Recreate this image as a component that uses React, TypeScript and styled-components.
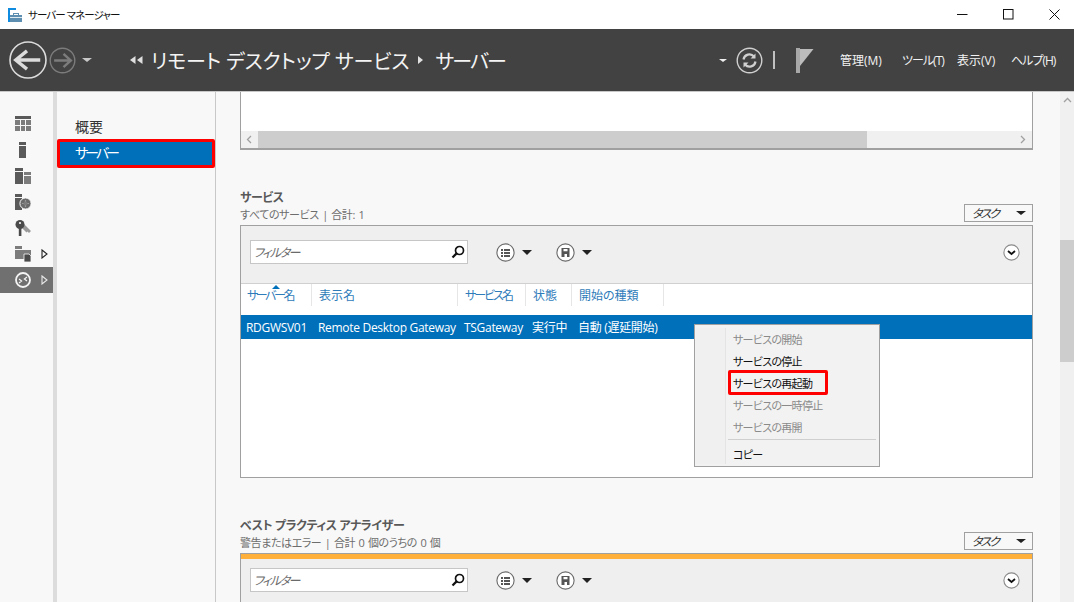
import React from "react";
import styled, { createGlobalStyle } from "styled-components";

const GlobalStyle = createGlobalStyle`
  html, body {
    margin: 0;
    padding: 0;
    height: 100%;
    overflow: hidden;
    background: #f8f8f8;
    font-family: "Open Sans", "Noto Sans CJK JP", sans-serif;
    font-feature-settings: "palt";
  }
  * { box-sizing: border-box; }
`;

const Window = styled.div`
  width: 1074px;
  height: 602px;
  display: flex;
  flex-direction: column;
  overflow: hidden;
`;

const TitleBar = styled.div`
  height: 29px;
  background: #fff;
  display: flex;
  align-items: center;
  padding-left: 8px;
`;

const TitleText = styled.span`
  margin-left: 6px;
  font-size: 10.5px;
  letter-spacing: -0.9px;
  color: #111;
`;

const WinButtons = styled.div`
  margin-left: auto;
  margin-right: -3px;
  display: flex;
  align-items: center;
`;

const WinButton = styled.div`
  width: 46px;
  height: 26px;
  display: flex;
  align-items: center;
  justify-content: center;
`;

const Header = styled.header`
  height: 63px;
  background: #424242;
  border-bottom: 1px solid #c8c8c8;
  display: flex;
  align-items: center;
  padding-left: 9px;
  color: #fff;
`;

const Gap = styled.span<{ $w: number }>`
  flex: none;
  width: ${(p) => p.$w}px;
`;

const Crumb = styled.span<{ $ls?: number }>`
  font-size: 20px;
  letter-spacing: ${(p) => p.$ls ?? -0.1}px;
  color: #f4f4f4;
  white-space: pre;
`;

const HeaderMenu = styled.nav`
  margin-left: auto;
  display: flex;
  align-items: center;
`;

const MenuLabel = styled.span<{ $w: number; $ls: number }>`
  width: ${(p) => p.$w}px;
  font-size: 12px;
  letter-spacing: ${(p) => p.$ls}px;
  color: #f2f2f2;
  white-space: nowrap;
`;

const Body = styled.div`
  flex: 1;
  display: flex;
  min-height: 0;
`;

const Rail = styled.aside`
  width: 57px;
  background: #f8f8f8;
  border-right: 4px solid #dcdcdc;
  padding-top: 19px;
  display: flex;
  flex-direction: column;
`;

const RailItem = styled.div<{ $active?: boolean }>`
  height: 26px;
  display: flex;
  align-items: center;
  padding-left: 15px;
  background: ${(p) => (p.$active ? "#707070" : "transparent")};
  svg.arrow { margin-left: 10px; }
`;

const Nav = styled.nav`
  width: 159px;
  background: #f8f8f8;
  border-right: 1px solid #c8c8c8;
  padding-top: 21px;
`;

const NavItem = styled.div<{ $selected?: boolean }>`
  height: ${(p) => (p.$selected ? "29px" : "26px")};
  display: flex;
  align-items: center;
  padding: ${(p) => (p.$selected ? "0 0 3px 15px" : "0 0 0 18px")};
  font-size: 14px;
  letter-spacing: ${(p) => (p.$selected ? "-3px" : "0")};
  color: ${(p) => (p.$selected ? "#fff" : "#333")};
  background: ${(p) => (p.$selected ? "#0070bb" : "transparent")};
  border: ${(p) => (p.$selected ? "3px solid #ff0000" : "none")};
  border-radius: 2px;
`;

const Content = styled.main`
  width: 844px;
  padding-left: 24px;
  background: #f8f8f8;
  position: relative;
  overflow: hidden;
`;

const Panel = styled.section<{ $h: number; $clipped?: boolean }>`
  width: 793px;
  height: ${(p) => p.$h}px;
  background: #fff;
  border-style: solid;
  border-color: #a0a0a0;
  border-width: ${(p) => (p.$clipped ? "0 1px 2px 1px" : "1px")};
  display: flex;
  flex-direction: column;
`;

const TopFill = styled.div`
  flex: 1;
`;

const HScroll = styled.div`
  height: 17px;
  background: #f0f0f0;
  display: flex;
  align-items: center;
`;

const HArrow = styled.div<{ $end?: boolean }>`
  width: 17px;
  height: 100%;
  margin-left: ${(p) => (p.$end ? "auto" : "0")};
  margin-right: ${(p) => (p.$end ? "1px" : "0")};
  display: flex;
  align-items: center;
  justify-content: center;
`;

const HThumb = styled.div`
  width: 609px;
  height: 100%;
  background: #cdcdcd;
`;

const SectionHead = styled.div<{ $mt: number }>`
  margin-top: ${(p) => p.$mt}px;
  height: 36px;
  display: flex;
  justify-content: space-between;
  align-items: flex-end;
  padding-bottom: 2px;
  width: 793px;
`;

const SectionTitle = styled.div`
  font-size: 12px;
  font-weight: 700;
  line-height: 16px;
  letter-spacing: -0.4px;
  color: #595959;
`;

const SectionSub = styled.div`
  font-size: 11px;
  line-height: 17px;
  letter-spacing: -0.4px;
  word-spacing: 1px;
  color: #6d6d6d;
`;

const TaskButton = styled.div`
  width: 69px;
  height: 18px;
  margin-bottom: 1px;
  border: 1px solid #a0a0a0;
  background: #f8f8f8;
  display: flex;
  align-items: center;
  justify-content: space-between;
  padding: 0 6px 0 8px;
  font-size: 12px;
  letter-spacing: -2px;
  color: #333;
`;

const Slant = styled.span`
  display: inline-block;
  transform: skewX(-14deg);
`;

const Caret = styled.span<{ $size?: number; $color?: string }>`
  display: inline-block;
  width: 0;
  height: 0;
  border-left: ${(p) => p.$size ?? 5}px solid transparent;
  border-right: ${(p) => p.$size ?? 5}px solid transparent;
  border-top: ${(p) => (p.$size ?? 5) - 0.5}px solid ${(p) => p.$color ?? "#222"};
`;

const Warning = styled.div`
  height: 5px;
  background: #ffb03b;
  flex: none;
`;

const Toolbar = styled.div<{ $h: number; $pt: number }>`
  height: ${(p) => p.$h}px;
  background: #efefef;
  flex: none;
  display: flex;
  align-items: flex-start;
  padding: ${(p) => p.$pt}px 12px 0 9px;
  border-bottom: 1px solid #d0d0d0;
`;

const Filter = styled.div`
  width: 218px;
  height: 24px;
  background: #fff;
  border: 1px solid #c6c6c6;
  display: flex;
  align-items: center;
  justify-content: space-between;
  padding: 0 1px 0 4px;
  font-size: 12px;
  letter-spacing: -1.5px;
  color: #6a6a6a;
`;

const ToolGroup = styled.div<{ $ml: number }>`
  margin-left: ${(p) => p.$ml}px;
  height: 24px;
  display: flex;
  align-items: center;
  gap: 7px;
`;

const ExpandSlot = styled.div`
  margin-left: auto;
  height: 24px;
  display: flex;
  align-items: center;
`;

const COLS = "71px 146px 68px 46px 92px";

const HeadRow = styled.div`
  height: 31px;
  display: grid;
  grid-template-columns: ${COLS};
  align-items: start;
  flex: none;
`;

const HeadCell = styled.div<{ $ls: number }>`
  position: relative;
  height: 22px;
  padding-left: 7px;
  display: flex;
  align-items: center;
  font-size: 12px;
  letter-spacing: ${(p) => p.$ls}px;
  color: #2f7cba;
  border-right: 1px solid #e6e6e6;
  white-space: nowrap;
  &:first-child { padding-left: 6px; }
`;

const SortMark = styled.span`
  position: absolute;
  left: 31px;
  top: 1px;
  width: 0;
  height: 0;
  border-left: 4.5px solid transparent;
  border-right: 4.5px solid transparent;
  border-bottom: 4px solid #0070bb;
`;

const DataRow = styled.div`
  height: 24px;
  display: grid;
  grid-template-columns: ${COLS};
  background: #0070bb;
  flex: none;
`;

const DataCell = styled.div`
  padding-left: 6px;
  display: flex;
  align-items: center;
  font-size: 12px;
  letter-spacing: -0.3px;
  color: #fff;
  white-space: nowrap;
  &:first-child { padding-left: 5px; }
`;

const ContextMenu = styled.div`
  position: absolute;
  left: 478px;
  top: 232px;
  width: 186px;
  height: 143px;
  background: #f2f2f2;
  border: 1px solid #a0a0a0;
  padding: 3px 3px 0 2px;
  display: flex;
  flex-direction: column;
`;

const MenuGutter = styled.div`
  position: absolute;
  left: 1px;
  top: 3px;
  bottom: 2px;
  width: 30px;
  border-right: 1px solid #e4e4e4;
  background: #f0f0f0;
`;

const MenuRow = styled.div<{ $disabled?: boolean }>`
  position: relative;
  height: 22px;
  display: flex;
  align-items: center;
  padding-left: 36px;
  font-size: 11px;
  letter-spacing: -0.7px;
  color: ${(p) => (p.$disabled ? "#8a8a8a" : "#111")};
`;

const RedBox = styled.span`
  position: absolute;
  left: 31px;
  top: -2px;
  width: 100px;
  height: 25px;
  border: 3px solid #ff0000;
  border-radius: 2px;
`;

const MenuSep = styled.div`
  position: relative;
  height: 1px;
  margin: 1px 0 3px 31px;
  background: #cfcfcf;
`;

const VScroll = styled.div`
  width: 14px;
  background: #f0f0f0;
  display: flex;
  flex-direction: column;
  align-items: center;
  padding-top: 4px;
`;

const VThumb = styled.div`
  width: 100%;
  height: 122px;
  margin-top: 135px;
  background: #cdcdcd;
`;

// window and header drawings
const AppIcon = () => (
  <svg width="14" height="14" viewBox="0 0 14 14">
    <rect x="0" y="0" width="8" height="2" fill="#0f8be0" />
    <rect x="0" y="2" width="2" height="12" fill="#0f8be0" />
    <path d="M2 7h12v7H2z" fill="#5f8fb0" />
    <path d="M5 7V5h6v2h-1V6H6v1z" fill="#5f8fb0" />
    <rect x="2" y="9" width="12" height="1" fill="#dfe9f0" />
  </svg>
);

const BackCircle = ({ r, dim, size }: { r: number; dim?: boolean; size: number }) => {
  const c = size / 2;
  const col = dim ? "#7c7c7c" : "#dcdcdc";
  const a = r * 0.68;
  return (
    <svg width={size} height={size} viewBox={`0 0 ${size} ${size}`}>
      <circle cx={c} cy={c} r={r} fill="none" stroke={col} strokeWidth={dim ? 1.4 : 1.6} />
      {dim ? (
        <path d={`M${c - a} ${c}H${c + a * 0.8}M${c + 1} ${c - a * 0.8}L${c + a} ${c}L${c + 1} ${c + a * 0.8}`} fill="none" stroke={col} strokeWidth="2.4" />
      ) : (
        <path d={`M${c + a} ${c}H${c - a * 0.8}M${c - 1} ${c - a * 0.75}L${c - a} ${c}L${c - 1} ${c + a * 0.75}`} fill="none" stroke={col} strokeWidth="3.4" />
      )}
    </svg>
  );
};

const Refresh = () => (
  <svg width="27" height="27" viewBox="0 0 27 27">
    <circle cx="13.5" cy="13.5" r="12.3" fill="none" stroke="#d0d0d0" strokeWidth="1.4" />
    <path d="M7.5 12.5a6 6 0 0 1 10.5-3M19.5 14.5a6 6 0 0 1-10.5 3" fill="none" stroke="#d0d0d0" strokeWidth="2.2" />
    <path d="M19.5 6.5v5h-5zM7.5 20.5v-5h5z" fill="#d0d0d0" />
  </svg>
);

const Flag = () => (
  <svg width="18" height="25" viewBox="0 0 18 25">
    <rect x="0" y="0" width="4" height="25" fill="#a8a8a8" />
    <path d="M4 1h13.5L4 18z" fill="#bcbcbc" />
  </svg>
);

const RailGrid = () => (
  <svg width="16" height="16" viewBox="0 0 16 16">
    <path d="M0 0h16v3H0z" fill="#5a5a5a" />
    <path d="M0 4h5v5H0zM6 4h4v5H6zM11 4h5v5h-5zM0 10h5v5H0zM6 10h4v5H6zM11 10h5v5h-5z" fill="#7c7c7c" />
  </svg>
);

const RailServer = () => (
  <svg width="16" height="16" viewBox="0 0 16 16">
    <path d="M4 0h7v3H4z" fill="#5a5a5a" />
    <path d="M4 4h7v12H4z" fill="#5a5a5a" />
  </svg>
);

const RailGroup = () => (
  <svg width="16" height="16" viewBox="0 0 16 16">
    <path d="M0 0h8v3H0zM0 4h8v12H0z" fill="#5a5a5a" />
    <path d="M9 4h7v3H9zM9 8h7v8H9z" fill="#7c7c7c" />
  </svg>
);

const RailClock = () => (
  <svg width="16" height="16" viewBox="0 0 16 16">
    <path d="M0 0h7v3H0zM0 4h7v12H0z" fill="#5a5a5a" />
    <circle cx="10.5" cy="9.5" r="5.6" fill="#6a6a6a" stroke="#f8f8f8" strokeWidth="1" />
    <path d="M10.5 6v7M7 9.5h7" stroke="#9c9c9c" strokeWidth="1.2" />
    <circle cx="10.5" cy="9.5" r="2" fill="#7c7c7c" />
  </svg>
);

const RailKeys = () => (
  <svg width="16" height="16" viewBox="0 0 16 16">
    <path d="M7 2l9 9-2 2-1.5-1.5-1 1-6-6z" fill="#9a9a9a" />
    <circle cx="5" cy="4.5" r="4.5" fill="#4a4a4a" />
    <path d="M3.8 7h2.6v9H3.8z" fill="#4a4a4a" />
    <circle cx="5" cy="3" r="1.1" fill="#f8f8f8" />
  </svg>
);

const RailFiles = () => (
  <svg width="16" height="16" viewBox="0 0 16 16">
    <path d="M0 0h7v3H0z" fill="#7c7c7c" />
    <path d="M0 4h16v8H9v1H0z" fill="#7c7c7c" />
    <path d="M9 8h5l2 2v6H9z" fill="#4a4a4a" stroke="#f8f8f8" strokeWidth="0.8" />
  </svg>
);

const RailRemote = () => (
  <svg width="16" height="16" viewBox="0 0 16 16">
    <circle cx="8" cy="8" r="7" fill="none" stroke="#f4f4f4" strokeWidth="1.8" />
    <path d="M4 7l2.6 2L4 11M12 5L9.4 7l2.6 2" fill="none" stroke="#f4f4f4" strokeWidth="1.2" />
  </svg>
);

const RailArrow = ({ light }: { light?: boolean }) => (
  <svg className="arrow" width="7" height="10" viewBox="0 0 7 10">
    <path d="M1 1l5 4-5 4z" fill="none" stroke={light ? "#e8e8e8" : "#222"} strokeWidth="1.1" />
  </svg>
);

const Chevron = ({ dir }: { dir: "left" | "right" | "up" }) => (
  <svg width="9" height="9" viewBox="0 0 9 9">
    <path
      d={dir === "left" ? "M6 1L2.5 4.5 6 8" : dir === "right" ? "M3 1l3.5 3.5L3 8" : "M1 6l3.5-3.5L8 6"}
      fill="none"
      stroke="#a0a0a0"
      strokeWidth="1.3"
    />
  </svg>
);

const Search = () => (
  <svg width="16" height="16" viewBox="0 0 16 16">
    <circle cx="9.5" cy="6.5" r="4" fill="none" stroke="#111" strokeWidth="1.7" />
    <path d="M6.6 9.4L2.5 13.5" stroke="#111" strokeWidth="2.2" />
  </svg>
);

const ListIcon = () => (
  <svg width="19" height="19" viewBox="0 0 19 19">
    <circle cx="9.5" cy="9.5" r="8.6" fill="#fff" stroke="#6a6a6a" strokeWidth="1.1" />
    <path d="M5 6h2v2H5zM8 6h6v2H8zM5 9h2v2H5zM8 9h6v2H8zM5 12h2v2H5zM8 12h6v2H8z" fill="#555" />
  </svg>
);

const SaveIcon = () => (
  <svg width="19" height="19" viewBox="0 0 19 19">
    <circle cx="9.5" cy="9.5" r="8.6" fill="#fff" stroke="#6a6a6a" strokeWidth="1.1" />
    <path d="M5.5 5h8v9h-8z" fill="#555" />
    <path d="M7.5 6h4v2.2h-4zM8.5 11h2.5v3H8.5z" fill="#fff" />
  </svg>
);

const ExpandIcon = () => (
  <svg width="17" height="17" viewBox="0 0 17 17">
    <circle cx="8.5" cy="8.5" r="7.6" fill="#fff" stroke="#8a8a8a" strokeWidth="1.1" />
    <path d="M5 7l3.5 3L12 7" fill="none" stroke="#111" strokeWidth="1.8" />
  </svg>
);

const Tools = () => (
  <>
    <Filter>
      <Slant>フィルター</Slant>
      <Search />
    </Filter>
    <ToolGroup $ml={28}>
      <ListIcon />
      <Caret $size={5.5} />
    </ToolGroup>
    <ToolGroup $ml={24}>
      <SaveIcon />
      <Caret $size={5.5} />
    </ToolGroup>
    <ExpandSlot>
      <ExpandIcon />
    </ExpandSlot>
  </>
);

const headCols = [
  { label: "サーバー名", ls: -2.4 },
  { label: "表示名", ls: 0 },
  { label: "サービス名", ls: -2 },
  { label: "状態", ls: 0 },
  { label: "開始の種類", ls: 0 },
];
const rowCols = ["RDGWSV01", "Remote Desktop Gateway", "TSGateway", "実行中", "自動 (遅延開始)"];

const menuItems = [
  { label: "サービスの開始", disabled: true },
  { label: "サービスの停止" },
  { label: "サービスの再起動", marked: true },
  { label: "サービスの一時停止", disabled: true },
  { label: "サービスの再開", disabled: true },
];

const railIcons = [
  <RailGrid key="a" />,
  <RailServer key="b" />,
  <RailGroup key="c" />,
  <RailClock key="d" />,
  <RailKeys key="e" />,
];

export default function App() {
  return (
    <>
      <GlobalStyle />
      <Window>
        <TitleBar>
          <AppIcon />
          <TitleText>サーバー マネージャー</TitleText>
          <WinButtons>
            <WinButton>
              <svg width="11" height="11" viewBox="0 0 11 11"><path d="M0 5.5h10.5" stroke="#111" /></svg>
            </WinButton>
            <WinButton>
              <svg width="11" height="11" viewBox="0 0 11 11"><rect x="0.5" y="0.5" width="9.5" height="9.5" fill="none" stroke="#111" /></svg>
            </WinButton>
            <WinButton>
              <svg width="11" height="11" viewBox="0 0 11 11"><path d="M0.5 0.5l10 10M10.5 0.5l-10 10" stroke="#111" /></svg>
            </WinButton>
          </WinButtons>
        </TitleBar>

        <Header>
          <BackCircle r={18} size={38} />
          <Gap $w={2} />
          <BackCircle r={12.3} size={27} dim />
          <Gap $w={6} />
          <Caret $size={5} $color="#c8c8c8" />
          <Gap $w={38} />
          <svg width="13" height="8" viewBox="0 0 13 8"><path d="M5.5 0v8L0 4zM12.5 0v8L7 4z" fill="#e0e0e0" /></svg>
          <Gap $w={8} />
          <Crumb>リモート デスクトップ サービス</Crumb>
          <Gap $w={9} />
          <svg width="5" height="8" viewBox="0 0 5 8"><path d="M0 0v8l5-4z" fill="#e0e0e0" /></svg>
          <Gap $w={12} />
          <Crumb $ls={-1.8}>サーバー</Crumb>
          <HeaderMenu>
            <Caret $size={4} $color="#f0f0f0" />
            <Gap $w={9} />
            <Refresh />
            <Gap $w={10} />
            <svg width="2" height="18" viewBox="0 0 2 18"><rect width="2" height="18" fill="#c0c0c0" /></svg>
            <Gap $w={21} />
            <Flag />
            <Gap $w={26} />
            <MenuLabel $w={62} $ls={0}>管理(M)</MenuLabel>
            <MenuLabel $w={55} $ls={-1}>ツール(T)</MenuLabel>
            <MenuLabel $w={54} $ls={0}>表示(V)</MenuLabel>
            <MenuLabel $w={63} $ls={-1}>ヘルプ(H)</MenuLabel>
          </HeaderMenu>
        </Header>

        <Body>
          <Rail>
            {railIcons.map((icon) => (
              <RailItem key={icon.key}>{icon}</RailItem>
            ))}
            <RailItem>
              <RailFiles />
              <RailArrow />
            </RailItem>
            <RailItem $active>
              <RailRemote />
              <RailArrow light />
            </RailItem>
          </Rail>

          <Nav>
            <NavItem>概要</NavItem>
            <NavItem $selected>サーバー</NavItem>
          </Nav>

          <Content>
            <Panel $h={58} $clipped>
              <TopFill />
              <HScroll>
                <HArrow><Chevron dir="left" /></HArrow>
                <HThumb />
                <HArrow $end><Chevron dir="right" /></HArrow>
              </HScroll>
            </Panel>

            <SectionHead $mt={39}>
              <div>
                <SectionTitle>サービス</SectionTitle>
                <SectionSub>すべてのサービス | 合計: 1</SectionSub>
              </div>
              <TaskButton><Slant>タスク</Slant><Caret $size={5} /></TaskButton>
            </SectionHead>

            <Panel $h={253}>
              <Toolbar $h={58} $pt={14}><Tools /></Toolbar>
              <HeadRow>
                {headCols.map((c, i) => (
                  <HeadCell key={c.label} $ls={c.ls}>
                    {i === 0 && <SortMark />}
                    {c.label}
                  </HeadCell>
                ))}
              </HeadRow>
              <DataRow>
                {rowCols.map((c) => (
                  <DataCell key={c}>{c}</DataCell>
                ))}
              </DataRow>
            </Panel>

            <SectionHead $mt={39}>
              <div>
                <SectionTitle>ベスト プラクティス アナライザー</SectionTitle>
                <SectionSub>警告またはエラー | 合計 0 個のうちの 0 個</SectionSub>
              </div>
              <TaskButton><Slant>タスク</Slant><Caret $size={5} /></TaskButton>
            </SectionHead>

            <Panel $h={80}>
              <Warning />
              <Toolbar $h={60} $pt={9}><Tools /></Toolbar>
            </Panel>

            <ContextMenu>
              <MenuGutter />
              {menuItems.map((m) => (
                <MenuRow key={m.label} $disabled={m.disabled}>
                  {m.marked && <RedBox />}
                  {m.label}
                </MenuRow>
              ))}
              <MenuSep />
              <MenuRow>コピー</MenuRow>
            </ContextMenu>
          </Content>

          <VScroll>
            <Chevron dir="up" />
            <VThumb />
          </VScroll>
        </Body>
      </Window>
    </>
  );
}
